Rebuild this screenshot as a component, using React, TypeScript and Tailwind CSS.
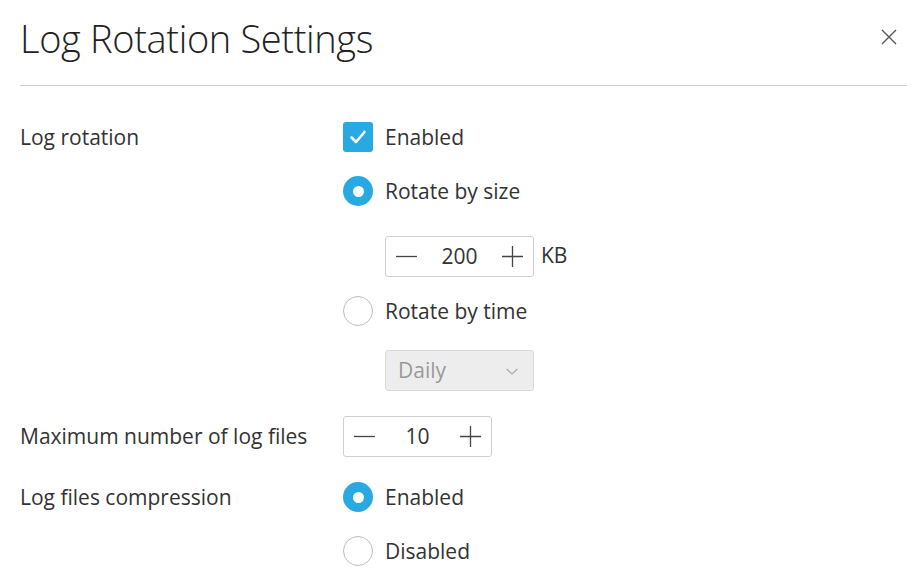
import React, { useState } from "react";

const font = "font-['Open_Sans',sans-serif]";

const Stepper: React.FC<{ value: number; onChange: (v: number) => void }> = ({ value, onChange }) => (
  <div className="flex items-center justify-between w-[149px] h-[41px] border border-[#cfcfcf] rounded-[3px] bg-white px-[10px]">
    <button className="h-full flex items-center" onClick={() => onChange(Math.max(0, value - 1))}>
      <svg width="21" height="21" viewBox="0 0 21 21">
        <path d="M0 10.5h21" stroke="#444" strokeWidth="1.3" />
      </svg>
    </button>
    <div className="text-[21px] text-[#333]">{value}</div>
    <button className="h-full flex items-center" onClick={() => onChange(value + 1)}>
      <svg width="21" height="21" viewBox="0 0 21 21">
        <path d="M0 10.5h21M10.5 0v21" stroke="#444" strokeWidth="1.3" />
      </svg>
    </button>
  </div>
);

const Radio: React.FC<{ checked: boolean; label: string; onClick: () => void }> = ({ checked, label, onClick }) => (
  <div className="flex items-center gap-3 cursor-pointer" onClick={onClick}>
    {checked ? (
      <span className="w-[30px] h-[30px] rounded-full bg-[#29a9e1] flex items-center justify-center">
        <span className="w-[11px] h-[11px] rounded-full bg-white" />
      </span>
    ) : (
      <span className="w-[30px] h-[30px] rounded-full border border-[#bdbdbd] bg-white" />
    )}
    <span className="text-[21px] leading-[30px] text-[#333]">{label}</span>
  </div>
);

const App: React.FC = () => {
  const [enabled, setEnabled] = useState(true);
  const [mode, setMode] = useState<"size" | "time">("size");
  const [size, setSize] = useState(200);
  const [files, setFiles] = useState(10);
  const [compress, setCompress] = useState(true);

  return (
    <div className={`${font} w-[921px] h-[588px] bg-white text-[#333] px-[20px] overflow-hidden`}>
      {/* Header */}
      <div className="flex items-center justify-between h-[76px] pt-[1px]">
        <h1 className="text-[38px] font-light text-[#222] tracking-[-0.35px]">Log Rotation Settings</h1>
        <button className="mr-[3px] mt-[-3px]">
          <svg width="18" height="18" viewBox="0 0 18 18">
            <path d="M2 2l14 14M16 2L2 16" stroke="#555" strokeWidth="1.4" />
          </svg>
        </button>
      </div>
      <div className="h-px bg-[#cccccc] mt-[9px] mr-[-6px]" />

      {/* Log rotation */}
      <div className="flex mt-[36px]">
        <div className="w-[323px] text-[21px] leading-[30px]">Log rotation</div>
        <div className="flex flex-col">
          <div className="flex items-center gap-3 cursor-pointer" onClick={() => setEnabled(!enabled)}>
            <span className="w-[30px] h-[30px] rounded-[3px] bg-[#29a9e1] flex items-center justify-center">
              {enabled && (
                <svg width="20" height="20" viewBox="0 0 20 20">
                  <path d="M3.5 10.5l4.5 4.5 8.5-10" stroke="white" strokeWidth="2.6" fill="none" strokeLinecap="round" strokeLinejoin="round" />
                </svg>
              )}
            </span>
            <span className="text-[21px] leading-[30px]">Enabled</span>
          </div>
          <div className="mt-[24px]">
            <Radio checked={mode === "size"} label="Rotate by size" onClick={() => setMode("size")} />
          </div>
          <div className="flex items-center gap-[7px] ml-[42px] mt-[30px]">
            <Stepper value={size} onChange={setSize} />
            <span className="text-[21px] mt-[-2px]">KB</span>
          </div>
          <div className="mt-[19px]">
            <Radio checked={mode === "time"} label="Rotate by time" onClick={() => setMode("time")} />
          </div>
          <div className="ml-[42px] mt-[24px] w-[149px] h-[41px] rounded-[3px] border border-[#d9d9d9] bg-[#ededed] flex items-center justify-between pl-[12px] pr-[14px]">
            <span className="text-[21px] text-[#999]">Daily</span>
            <svg width="14" height="10" viewBox="0 0 14 10">
              <path d="M1.5 3l5.5 5 5.5-5" stroke="#aaa" strokeWidth="1.2" fill="none" />
            </svg>
          </div>
        </div>
      </div>

      {/* Maximum number of log files */}
      <div className="flex items-center mt-[25px]">
        <div className="w-[323px] text-[21px]">Maximum number of log files</div>
        <Stepper value={files} onChange={setFiles} />
      </div>

      {/* Compression */}
      <div className="flex mt-[25px]">
        <div className="w-[323px] text-[21px] leading-[30px]">Log files compression</div>
        <div className="flex flex-col gap-[24px]">
          <Radio checked={compress} label="Enabled" onClick={() => setCompress(true)} />
          <Radio checked={!compress} label="Disabled" onClick={() => setCompress(false)} />
        </div>
      </div>
    </div>
  );
};

export default App;
